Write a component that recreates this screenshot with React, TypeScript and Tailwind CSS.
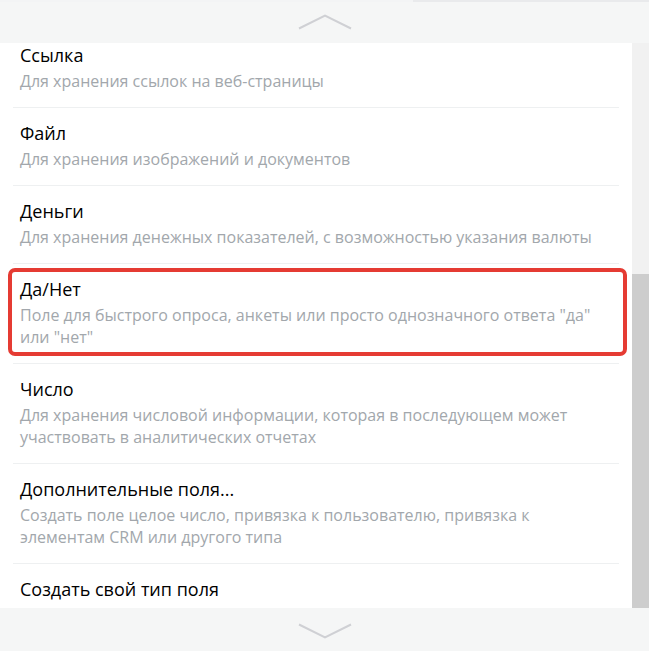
import React from "react";

const items: { title: string; desc: string }[] = [
  { title: "Ссылка", desc: "Для хранения ссылок на веб-страницы" },
  { title: "Файл", desc: "Для хранения изображений и документов" },
  { title: "Деньги", desc: "Для хранения денежных показателей, с возможностью указания валюты" },
  { title: "Да/Нет", desc: "Поле для быстрого опроса, анкеты или просто однозначного ответа \"да\" или \"нет\"" },
  { title: "Число", desc: "Для хранения числовой информации, которая в последующем может участвовать в аналитических отчетах" },
  { title: "Дополнительные поля...", desc: "Создать поле целое число, привязка к пользователю, привязка к элементам CRM или другого типа" },
  { title: "Создать свой тип поля", desc: "Создайте приложение и свой тип поля, используя REST API и возможности Битрикс24" },
];

export default function App() {
  return (
    <div
      className="w-[649px] h-[651px] flex flex-col bg-white overflow-hidden"
      style={{ fontFamily: '"Open Sans", "Noto Sans", sans-serif' }}
    >
      <div className="h-[43px] shrink-0 bg-[#f5f6f6] flex flex-col">
        <div className="h-[2px] flex">
          <div className="w-[413px] bg-[#f3f4f5]" />
          <div className="flex-1 bg-[#e9eaec]" />
        </div>
        <div className="flex-1 flex items-center justify-center">
          <svg width="54" height="16" viewBox="0 0 54 16" className="mt-[-2px]">
            <polyline points="1,14.5 27,1.5 53,14.5" fill="none" stroke="#cfd0d4" strokeWidth="2" />
          </svg>
        </div>
      </div>
      <div className="flex-1 flex min-h-0">
        <div className="flex-1 overflow-hidden">
          <div className="mt-[-13px] px-[13px]">
            {items.map((it) => {
              const active = it.title === "Да/Нет";
              return (
                <div key={it.title} className="border-b border-[#eef0f1]">
                  <div
                    className={
                      active
                        ? "ml-[-5px] mr-[-8px] mt-[4px] mb-[7px] pl-[8px] pr-[12px] pt-[5px] pb-[4px] border-[4px] border-[#e53b33] rounded-[7px]"
                        : "pl-[7px] pr-[10px] pt-[13px] pb-[15px]"
                    }
                  >
                    <div className="text-[18px] leading-[24px] text-[#000]">{it.title}</div>
                    <div className="mt-[3px] text-[16px] leading-[22px] text-[#a2a7ac]">{it.desc}</div>
                  </div>
                </div>
              );
            })}
          </div>
        </div>
        <div className="w-[17px] shrink-0 flex flex-col bg-[#f1f1f1]">
          <div className="h-[231px]" />
          <div className="flex-1 bg-[#cdcdcd]" />
        </div>
      </div>
      <div className="h-[43px] shrink-0 bg-[#f5f6f6] flex items-center justify-center">
        <svg width="54" height="16" viewBox="0 0 54 16" className="mb-[-2px]">
          <polyline points="1,1.5 27,14.5 53,1.5" fill="none" stroke="#cfd0d4" strokeWidth="2" />
        </svg>
      </div>
    </div>
  );
}
